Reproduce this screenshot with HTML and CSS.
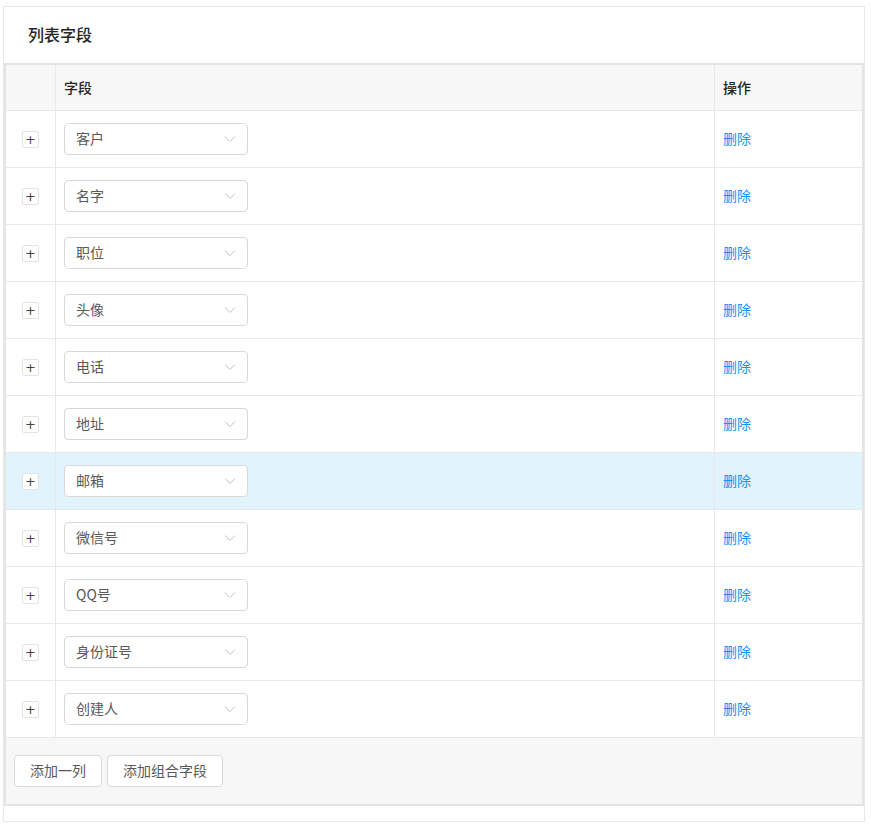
FILE: index.html
```html
<!DOCTYPE html>
<html lang="zh-CN">
<head>
<meta charset="utf-8">
<title>列表字段</title>
<link rel="stylesheet" href="styles.css">
</head>
<body>
<div class="card">
  <div class="card-head">列表字段</div>
  <div class="table">
    <div class="row head">
      <div class="c1"></div>
      <div class="c2">字段</div>
      <div class="c3">操作</div>
    </div>
    <div class="row"><div class="c1"><span class="plus">+</span></div><div class="c2"><div class="select"><span>客户</span><svg class="arrow" width="12" height="8" viewBox="0 0 12 8"><polyline points="1,1.5 6,6.5 11,1.5"/></svg></div></div><div class="c3"><a class="del">删除</a></div></div>
    <div class="row"><div class="c1"><span class="plus">+</span></div><div class="c2"><div class="select"><span>名字</span><svg class="arrow" width="12" height="8" viewBox="0 0 12 8"><polyline points="1,1.5 6,6.5 11,1.5"/></svg></div></div><div class="c3"><a class="del">删除</a></div></div>
    <div class="row"><div class="c1"><span class="plus">+</span></div><div class="c2"><div class="select"><span>职位</span><svg class="arrow" width="12" height="8" viewBox="0 0 12 8"><polyline points="1,1.5 6,6.5 11,1.5"/></svg></div></div><div class="c3"><a class="del">删除</a></div></div>
    <div class="row"><div class="c1"><span class="plus">+</span></div><div class="c2"><div class="select"><span>头像</span><svg class="arrow" width="12" height="8" viewBox="0 0 12 8"><polyline points="1,1.5 6,6.5 11,1.5"/></svg></div></div><div class="c3"><a class="del">删除</a></div></div>
    <div class="row"><div class="c1"><span class="plus">+</span></div><div class="c2"><div class="select"><span>电话</span><svg class="arrow" width="12" height="8" viewBox="0 0 12 8"><polyline points="1,1.5 6,6.5 11,1.5"/></svg></div></div><div class="c3"><a class="del">删除</a></div></div>
    <div class="row"><div class="c1"><span class="plus">+</span></div><div class="c2"><div class="select"><span>地址</span><svg class="arrow" width="12" height="8" viewBox="0 0 12 8"><polyline points="1,1.5 6,6.5 11,1.5"/></svg></div></div><div class="c3"><a class="del">删除</a></div></div>
    <div class="row hover"><div class="c1"><span class="plus">+</span></div><div class="c2"><div class="select"><span>邮箱</span><svg class="arrow" width="12" height="8" viewBox="0 0 12 8"><polyline points="1,1.5 6,6.5 11,1.5"/></svg></div></div><div class="c3"><a class="del">删除</a></div></div>
    <div class="row"><div class="c1"><span class="plus">+</span></div><div class="c2"><div class="select"><span>微信号</span><svg class="arrow" width="12" height="8" viewBox="0 0 12 8"><polyline points="1,1.5 6,6.5 11,1.5"/></svg></div></div><div class="c3"><a class="del">删除</a></div></div>
    <div class="row"><div class="c1"><span class="plus">+</span></div><div class="c2"><div class="select"><span>QQ号</span><svg class="arrow" width="12" height="8" viewBox="0 0 12 8"><polyline points="1,1.5 6,6.5 11,1.5"/></svg></div></div><div class="c3"><a class="del">删除</a></div></div>
    <div class="row"><div class="c1"><span class="plus">+</span></div><div class="c2"><div class="select"><span>身份证号</span><svg class="arrow" width="12" height="8" viewBox="0 0 12 8"><polyline points="1,1.5 6,6.5 11,1.5"/></svg></div></div><div class="c3"><a class="del">删除</a></div></div>
    <div class="row"><div class="c1"><span class="plus">+</span></div><div class="c2"><div class="select"><span>创建人</span><svg class="arrow" width="12" height="8" viewBox="0 0 12 8"><polyline points="1,1.5 6,6.5 11,1.5"/></svg></div></div><div class="c3"><a class="del">删除</a></div></div>
    <div class="footer">
      <button class="btn">添加一列</button>
      <button class="btn">添加组合字段</button>
    </div>
  </div>
</div>
</body>
</html>
```

FILE: styles.css
```css
* { box-sizing: border-box; }
body {
  margin: 0;
  background: #fff;
  font-family: "Noto Sans CJK SC", "Noto Sans", sans-serif;
  font-size: 14px;
  color: #595959;
}
.card {
  margin: 6px 0 0 3px;
  width: 862px;
  height: 816px;
  border: 1px solid #e8e8e8;
  padding-bottom: 14px;
}
.card-head {
  height: 56px;
  padding-left: 24px;
  padding-bottom: 3px;
  display: flex;
  align-items: center;
  font-size: 16px;
  font-weight: 500;
  color: #262626;
}
.table {
  border: 2px solid #e4e4e4;
}
.row {
  display: flex;
  height: 57px;
  border-bottom: 1px solid #e8e8e8;
}
.row.head {
  height: 46px;
  background: #f7f7f7;
  color: #262626;
  font-weight: 500;
}
.row.hover { background: #e1f3fc; }
.c1 {
  width: 50px;
  border-right: 1px solid #e8e8e8;
  display: flex;
  align-items: center;
  justify-content: center;
}
.c2 {
  width: 659px;
  border-right: 1px solid #e8e8e8;
  padding-left: 8px;
  display: flex;
  align-items: center;
}
.c3 {
  flex: 1;
  padding-left: 8px;
  padding-bottom: 2px;
  display: flex;
  align-items: center;
}
.head .c2 { padding-left: 8px; padding-bottom: 2px; }
.plus {
  width: 17px;
  height: 17px;
  border: 1px solid #e3e3e3;
  border-radius: 2px;
  background: #fff;
  display: flex;
  align-items: center;
  justify-content: center;
  font-family: "DejaVu Sans", sans-serif;
  font-size: 13px;
  line-height: 1;
  color: #444;
}
.select {
  width: 184px;
  height: 32px;
  border: 1px solid #d9d9d9;
  border-radius: 4px;
  background: #fff;
  display: flex;
  align-items: center;
  justify-content: space-between;
  padding: 0 11px 0 11px;
  color: #595959;
}
.select span {
  display: block;
  line-height: 20px;
  margin-bottom: 2px;
}
.arrow {
  fill: none;
  stroke: #bfbfbf;
  stroke-width: 1;
}
.del {
  color: #1890ff;
  cursor: pointer;
}
.footer {
  background: #f7f7f7;
  height: 66px;
  padding: 17px 8px 0;
  display: flex;
  gap: 5px;
  align-items: flex-start;
}
.btn {
  height: 32px;
  padding: 0 15px 2px;
  border: 1px solid #d9d9d9;
  border-radius: 4px;
  background: #fff;
  font-family: "Noto Sans CJK SC", "Noto Sans", sans-serif;
  font-size: 14px;
  color: #595959;
}
```
